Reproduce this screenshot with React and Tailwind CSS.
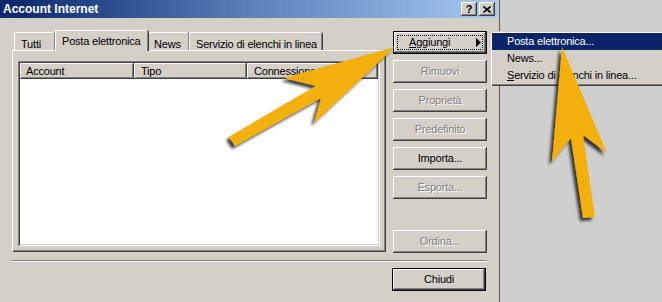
import React from "react";

const raised =
  "shadow-[inset_-1px_-1px_0_#404040,inset_1px_1px_0_#ffffff,inset_-2px_-2px_0_#808080,inset_2px_2px_0_#d4d0c8]";

const Button = ({ label, disabled, isDefault, focus, arrow, className = "" }) => {
  return (
    <div
      className={`relative h-[23px] w-[94px] flex items-center bg-[#d4d0c8] text-[11px] ${
        isDefault
          ? "border border-black shadow-[inset_-1px_-1px_0_#404040,inset_1px_1px_0_#ffffff,inset_-2px_-2px_0_#808080]"
          : raised
      } ${arrow ? "justify-between pl-[15px] pr-[5px]" : "justify-center"} ${className}`}
    >
      <span
        className={
          disabled
            ? "text-[#808080] [text-shadow:1px_1px_0_#ffffff]"
            : "text-black"
        }
      >
        {label}
      </span>
      {arrow && (
        <svg width="5" height="9" viewBox="0 0 5 9">
          <polygon points="0,0 5,4.5 0,9" fill="#000" />
        </svg>
      )}
      {focus && (
        <div className="absolute inset-[3px] border border-dotted border-black"></div>
      )}
    </div>
  );
};

const Tab = ({ label, selected, className = "" }) => {
  return (
    <div
      className={`relative flex items-start whitespace-nowrap bg-[#d4d0c8] border-l border-t border-white rounded-tl-[2px] rounded-tr-[2px] shadow-[inset_-1px_0_0_#808080,1px_0_0_#404040] text-[11px] ${
        selected ? "h-[21px] -mb-[1px] z-10 pt-[2px]" : "h-[18px] pt-[3px]"
      } ${className}`}
    >
      {label}
    </div>
  );
};

const HeaderCell = ({ label, className = "" }) => (
  <div
    className={`h-[16px] flex items-center bg-[#d4d0c8] shadow-[inset_-1px_-1px_0_#404040,inset_1px_1px_0_#ffffff,inset_-2px_-2px_0_#808080] text-[11px] ${className}`}
  >
    {label}
  </div>
);

export default function App() {
  return (
    <div className="relative w-[662px] h-[302px] overflow-hidden flex bg-[#cfcfcf] font-['Liberation_Sans',Arial,sans-serif] tracking-[-0.2px] whitespace-nowrap text-black select-none">
      {/* dialog */}
      <div className="w-[500px] h-full flex flex-col bg-[#d4d0c8] border-r border-r-[#5a5a5a] shrink-0">
        {/* title bar */}
        <div className="h-[18px] w-[498px] flex items-center justify-between bg-gradient-to-r from-[#0a246a] via-[#5b80bb] to-[#a6caf0]">
          <span className="pl-[3px] text-white font-bold text-[12px] tracking-normal leading-[18px]">
            Account Internet
          </span>
          <div className="flex items-center gap-[2px] pr-[3px]">
            <div className={`w-[16px] h-[14px] flex items-center justify-center bg-[#d4d0c8] ${raised} text-[11px] font-bold leading-none`}>
              ?
            </div>
            <div className={`w-[16px] h-[14px] flex items-center justify-center bg-[#d4d0c8] ${raised}`}>
              <svg width="8" height="7" viewBox="0 0 8 7">
                <path d="M0.5 0.5 L7.5 6.5 M7.5 0.5 L0.5 6.5" stroke="#000" strokeWidth="1.6" />
              </svg>
            </div>
          </div>
        </div>

        {/* body */}
        <div className="flex items-start pl-[12px] pt-[12px]">
          {/* left: tabs + panel */}
          <div className="w-[374px] flex flex-col">
            <div className="h-[20px] flex items-end pl-[2px]">
              <Tab label="Tutti" className="w-[41px] pl-[6px]" />
              <Tab label="Posta elettronica" selected className="w-[93px] pl-[6px]" />
              <Tab label="News" className="w-[41px] pl-[5px]" />
              <Tab label="Servizio di elenchi in linea" className="w-[133px] pl-[6px]" />
            </div>
            <div className="h-[202px] px-[6px] pt-[11px] pb-[6px] shadow-[inset_1px_1px_0_#ffffff,inset_-1px_-1px_0_#404040,inset_-2px_-2px_0_#808080]">
              <div className="h-full bg-white p-[2px] shadow-[inset_1px_1px_0_#808080,inset_-1px_-1px_0_#ffffff,inset_2px_2px_0_#404040,inset_-2px_-2px_0_#d4d0c8]">
                <div className="flex">
                  <HeaderCell label="Account" className="w-[114px] pl-[6px]" />
                  <HeaderCell label="Tipo" className="w-[113px] pl-[7px]" />
                  <HeaderCell label="Connessione" className="flex-1 pl-[7px]" />
                </div>
              </div>
            </div>
          </div>

          {/* right: buttons */}
          <div className="ml-[7px] mt-[1px] flex flex-col gap-[6px]">
            <Button label={<><span className="underline">A</span>ggiungi</>} isDefault focus arrow />
            <Button label="Rimuovi" disabled />
            <Button label="Proprietà" disabled />
            <Button label="Predefinito" disabled />
            <Button label="Importa..." />
            <Button label="Esporta..." disabled />
            <Button label="Ordina..." disabled className="mt-[25px]" />
          </div>
        </div>

        {/* separator */}
        <div className="ml-[12px] mt-[7px] w-[475px] border-t border-t-[#808080] border-b border-b-white"></div>

        {/* bottom */}
        <div className="flex justify-end pr-[13px] mt-[6px]">
          <Button label="Chiudi" isDefault />
        </div>
      </div>

      {/* popup menu */}
      <div className="absolute left-[490px] top-[31px] w-[200px] p-[2px] bg-[#d4d0c8] shadow-[inset_1px_1px_0_#d4d0c8,inset_2px_2px_0_#ffffff,inset_-1px_-1px_0_#404040,inset_-2px_-2px_0_#808080] text-[11px]">
        <div className="h-[17px] flex items-center pl-[15px] bg-[#0a246a] text-white">
          Posta elettronica...
        </div>
        <div className="h-[17px] flex items-center pl-[15px]">News...</div>
        <div className="h-[17px] flex items-center pl-[15px]">
          <span className="underline">S</span>ervizio di elenchi in linea...
        </div>
      </div>

      {/* arrows */}
      <svg className="absolute inset-0 pointer-events-none" width="662" height="302" viewBox="0 0 662 302">
        <defs>
          <filter id="sh" x="-20%" y="-20%" width="140%" height="140%">
            <feDropShadow dx="-3" dy="3" stdDeviation="1.6" floodColor="#000" floodOpacity="0.75" />
          </filter>
        </defs>
        <polygon
          points="229,137 316,86 284,78 395,47 314,123 321,98 235,146"
          fill="#f3b00b"
          filter="url(#sh)"
        />
        <polygon
          points="562,47 607,153 583,135 595,217 583,218 571,138 552,162"
          fill="#f3b00b"
          filter="url(#sh)"
        />
      </svg>
    </div>
  );
}
